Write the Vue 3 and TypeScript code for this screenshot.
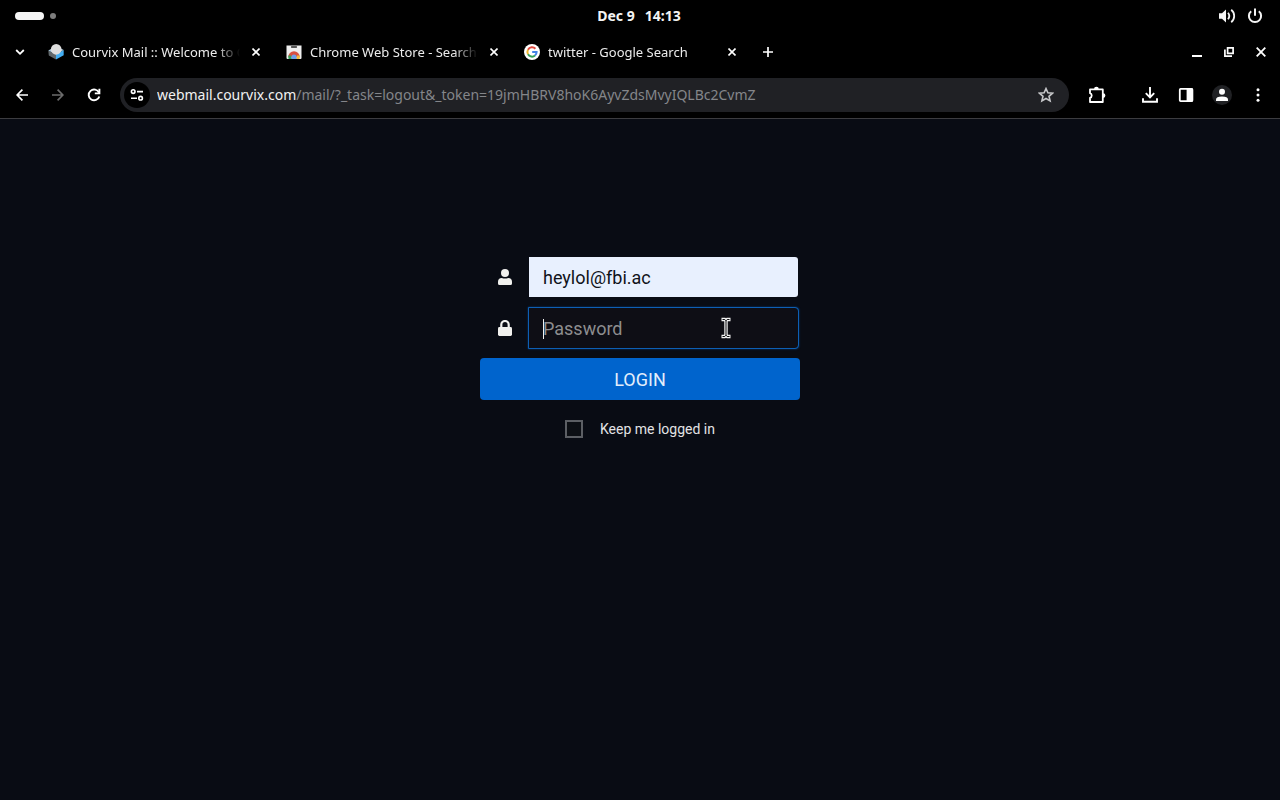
<script setup lang="ts">
import { ref } from 'vue'

interface Tab {
  id: number
  title: string
  icon: 'mail' | 'store' | 'google'
}

const tabs: Tab[] = [
  { id: 1, title: 'Courvix Mail :: Welcome to C', icon: 'mail' },
  { id: 2, title: 'Chrome Web Store - Search', icon: 'store' },
  { id: 3, title: 'twitter - Google Search', icon: 'google' },
]

const username = ref('heylol@fbi.ac')
const password = ref('')
const keep = ref(false)
</script>

<template>
  <div class="screen">
    <header class="system-bar">
      <div class="workspaces"><span class="ws-active"></span><span class="ws-dot"></span></div>
      <time class="clock"><span>Dec 9</span><span>14:13</span></time>
      <div class="status">
        <svg width="18" height="16" viewBox="0 0 18 16" fill="none" stroke="#f4f4f4" stroke-width="1.8">
          <path d="M1 5.2h3L8 1.4v13.2L4 10.8H1z" fill="#f4f4f4" stroke="none" />
          <path d="M10 4.8q2.6 3.2 0 6.4" />
          <path d="M13.2 1.8q3 2.4 3 6.2t-3 6.2" />
        </svg>
        <svg width="16" height="16" viewBox="0 0 16 16" fill="none" stroke="#f4f4f4" stroke-width="2">
          <path d="M4.2 3.2a6.1 6.1 0 1 0 7.6 0M8 0.6v7.2" />
        </svg>
      </div>
    </header>

    <nav class="tab-strip" aria-label="Tabs">
      <button class="tab-search" aria-label="Search tabs">
        <svg width="10" height="10" viewBox="0 0 10 10" fill="none" stroke="#fff" stroke-width="1.8"><path d="M1.2 3l3.8 3.8L8.8 3" /></svg>
      </button>
      <div v-for="tab in tabs" :key="tab.id" class="tab">
        <svg v-if="tab.icon === 'mail'" width="16" height="16" viewBox="0 0 16 16">
          <path d="M0.3 6.5L8 10.6v5L0.8 11.4z" fill="#60676b" />
          <path d="M8 10.6l7.7-4.6v5.2L8 15.6z" fill="#43aef3" />
          <path d="M0.3 6.5L3 5l10-.4L15.7 6 8 10.6z" fill="#a9c9dd" />
          <circle cx="8.2" cy="5.3" r="5.3" fill="#dedede" />
          <path d="M2.9 6.8L8 10.8l5.4-4z" fill="#dedede" />
        </svg>
        <svg v-else-if="tab.icon === 'store'" width="16" height="16" viewBox="0 0 16 16">
          <path d="M0.5 1.5h15v12.5a1 1 0 0 1-1 1h-13a1 1 0 0 1-1-1z" fill="#eeeeee" />
          <path d="M5.6 3h4.8" stroke="#222" stroke-width="1.4" stroke-linecap="round" />
          <path d="M2.2 13a5.8 5.8 0 0 1 11.6 0L8 13z" fill="#d9503f" />
          <path d="M2.4 11.6a5.8 5.8 0 0 0 .2 3.4h3.6L5 11.6z" fill="#35a15a" />
          <path d="M13.6 11.6q.6 1.8-.2 3.4H9.8l1.2-3.4z" fill="#f4be3b" />
          <path d="M5.4 15v-1.8a2.6 2.6 0 0 1 5.2 0V15z" fill="#6f9fe8" />
        </svg>
        <svg v-else width="16" height="16" viewBox="0 0 16 16" fill="none" stroke-width="2">
          <circle cx="8" cy="8" r="8" fill="#fff" />
          <path d="M4 5.7A4.6 4.6 0 0 1 11.4 4.8" stroke="#e04a3f" />
          <path d="M4 5.7a4.7 4.7 0 0 0 0 4.6" stroke="#f2b52d" />
          <path d="M4 10.3a4.6 4.6 0 0 0 7 1.2" stroke="#35a15a" />
          <path d="M11 11.5A4.6 4.6 0 0 0 12.6 8H8.2" stroke="#4382e8" />
        </svg>
        <a class="tab-title" href="#">{{ tab.title }}</a>
        <button class="tab-close" :aria-label="'Close ' + tab.title">
          <svg width="8" height="8" viewBox="0 0 8 8" stroke="#fff" stroke-width="1.6"><path d="M0.5 0.5l7 7M7.5 0.5l-7 7" /></svg>
        </button>
      </div>
      <button class="new-tab" aria-label="New tab">
        <svg width="10" height="10" viewBox="0 0 10 10" stroke="#fff" stroke-width="1.7"><path d="M5 0v10M0 5h10" /></svg>
      </button>
      <div class="window-controls">
        <button aria-label="Minimize">
          <svg width="10" height="10" viewBox="0 0 10 10"><path d="M0 8h10v2H0z" fill="#fff" /></svg>
        </button>
        <button aria-label="Restore">
          <svg width="10" height="10" viewBox="0 0 10 10" fill="none" stroke="#fff" stroke-width="1.7"><path d="M3.6 0.9h5.5v5.5H3.6z" /><path d="M0.9 2.5v6.6H8" /></svg>
        </button>
        <button aria-label="Close window">
          <svg width="10" height="10" viewBox="0 0 10 10" stroke="#fff" stroke-width="1.8"><path d="M0.7 0.7l8.6 8.6M9.3 0.7L0.7 9.3" /></svg>
        </button>
      </div>
    </nav>

    <div class="toolbar">
      <button aria-label="Back">
        <svg width="12" height="12" viewBox="0 0 12 12" fill="none" stroke="#fff" stroke-width="1.7"><path d="M12 6H1.4M6.4 0.7L1.1 6l5.3 5.3" /></svg>
      </button>
      <button aria-label="Forward" disabled>
        <svg width="12" height="12" viewBox="0 0 12 12" fill="none" stroke="#6c6c6c" stroke-width="1.7"><path d="M0 6h10.6M5.6 0.7L10.9 6l-5.3 5.3" /></svg>
      </button>
      <button aria-label="Reload">
        <svg width="14" height="14" viewBox="0 0 14 14" fill="none" stroke="#fff" stroke-width="1.9"><path d="M12 4.6A5.4 5.4 0 1 0 12.3 8.4" /><path d="M12.4 0.8v4.6H7.8" /></svg>
      </button>
      <div class="address">
        <button class="site-info" aria-label="View site information">
          <svg width="14" height="12" viewBox="0 0 14 12" fill="none" stroke="#fff" stroke-width="1.6"><circle cx="3.2" cy="2.6" r="1.8" /><path d="M7 2.6h6M1 9.2h6" /><circle cx="10.6" cy="9.2" r="1.8" /></svg>
        </button>
        <a class="url" href="#">webmail.courvix.com<span>/mail/?_task=logout&amp;_token=19jmHBRV8hoK6AyvZdsMvyIQLBc2CvmZ</span></a>
        <button class="star" aria-label="Bookmark this tab">
          <svg width="16" height="16" viewBox="0 0 16 16" fill="none" stroke="#c6c7c9" stroke-width="1.6"><path d="M8 1.6l1.9 4.2 4.6.4-3.5 3.1 1.1 4.6L8 11.5l-4.1 2.4L5 9.3 1.5 6.2l4.6-.4z" /></svg>
        </button>
      </div>
      <button class="extensions" aria-label="Extensions">
        <svg width="18" height="18" viewBox="0 0 18 18"><path d="M2 7.2V3.4h12.8V16H2v-4.2a2.4 2.4 0 0 0 0-4.6z" fill="none" stroke="#fff" stroke-width="1.8" stroke-linejoin="round" /><path d="M6 3.2a2.4 2.4 0 0 1 4.8 0zM15 7.2a2.4 2.4 0 0 1 0 4.8z" fill="#fff" /></svg>
      </button>
      <button aria-label="Downloads">
        <svg width="16" height="16" viewBox="0 0 16 16" fill="none" stroke="#fff" stroke-width="1.9"><path d="M8 0v10M3.8 6.2L8 10.4l4.2-4.2M1 11.2v3.6h14v-3.6" /></svg>
      </button>
      <button aria-label="Side panel">
        <svg width="16" height="16" viewBox="0 0 16 16"><rect x="1.8" y="1.9" width="12.6" height="12.2" rx="0.8" fill="none" stroke="#fff" stroke-width="1.8" /><path d="M8.6 1.5H15v13H8.6z" fill="#fff" /></svg>
      </button>
      <button aria-label="Profile">
        <svg width="20" height="20" viewBox="0 0 20 20"><circle cx="10" cy="10" r="10" fill="#202124" /><circle cx="10" cy="6.8" r="3" fill="#fff" /><path d="M4 16v-1.4q0-3.2 6-3.2t6 3.2V16z" fill="#fff" /></svg>
      </button>
      <button aria-label="Menu">
        <svg width="4" height="14" viewBox="0 0 4 14" fill="#fff"><circle cx="2" cy="1.8" r="1.5" /><circle cx="2" cy="7" r="1.5" /><circle cx="2" cy="12.2" r="1.5" /></svg>
      </button>
    </div>

    <main class="page">
      <form class="login" @submit.prevent>
        <div class="field">
          <label for="user" aria-label="Username">
            <svg width="14" height="16" viewBox="0 0 14 16" fill="#f1f1ee"><circle cx="7" cy="4" r="4" /><path d="M0 14.5v-1.7Q0 9 3.8 9q3.2 1 6.4 0Q14 9 14 12.8v1.7Q14 16 12.5 16h-11Q0 16 0 14.5z" /></svg>
          </label>
          <input id="user" v-model="username" class="filled" type="text" />
        </div>
        <div class="field">
          <label for="pass" aria-label="Password">
            <svg width="14" height="16" viewBox="0 0 14 16"><path d="M3.3 8V4.7a3.7 3.7 0 0 1 7.4 0V8" fill="none" stroke="#f1f1ee" stroke-width="2.2" /><rect y="7" width="14" height="9" rx="1.4" fill="#f1f1ee" /></svg>
          </label>
          <input id="pass" v-model="password" class="active" type="password" placeholder="Password" />
          <span class="caret"></span>
          <svg class="pointer" width="12" height="22" viewBox="0 0 12 22" fill="none"><path d="M1.5 2.5h3.2L6 3.8l1.3-1.3h3.2M6 3.5v15M1.5 19.5h3.2L6 18.2l1.3 1.3h3.2" stroke="#f4f4f4" stroke-width="3.4" /><path d="M2.5 2.5h2.3L6 3.8l1.2-1.3h2.3M6 3.5v15M2.5 19.5h2.3L6 18.2l1.2 1.3h2.3" stroke="#08090d" stroke-width="1" /></svg>
        </div>
        <button class="submit" type="submit">LOGIN</button>
        <label class="keep"><input v-model="keep" type="checkbox" />Keep me logged in</label>
      </form>
    </main>
  </div>
</template>

<style>
body {
  margin: 0;
  background: #090c14;
}
</style>

<style scoped>
.screen {
  display: flex;
  flex-direction: column;
  min-height: 100vh;
  background: #000;
  color: #fff;
  font-family: "Noto Sans", sans-serif;
}
svg {
  display: block;
  flex: none;
}
button {
  display: flex;
  align-items: center;
  justify-content: center;
  flex: none;
  padding: 0;
  border: 0;
  background: none;
  color: inherit;
  font: inherit;
}
a {
  color: inherit;
  text-decoration: none;
}
.system-bar {
  display: grid;
  grid-template-columns: 1fr auto 1fr;
  align-items: center;
  height: 32px;
  padding: 0 17px 0 15px;
}
.workspaces {
  display: flex;
  align-items: center;
  gap: 6px;
}
.ws-active {
  width: 29px;
  height: 8px;
  border-radius: 4px;
  background: #f6f6f6;
}
.ws-dot {
  width: 6px;
  height: 6px;
  border-radius: 50%;
  background: #7d7d7d;
}
.clock {
  display: flex;
  gap: 10px;
  font-size: 14px;
  font-weight: 700;
  line-height: 20px;
  color: #f4f4f4;
}
.status {
  display: flex;
  justify-content: flex-end;
  gap: 11px;
}
.tab-strip {
  display: flex;
  align-items: center;
  height: 40px;
  font-size: 13px;
}
.tab-search {
  width: 40px;
  height: 28px;
}
.tab {
  display: flex;
  align-items: center;
  gap: 8px;
  flex: 0 1 238px;
  box-sizing: border-box;
  min-width: 0;
  padding: 0 14px 0 8px;
}
.tab-title {
  flex: 1;
  min-width: 0;
  overflow: hidden;
  white-space: nowrap;
  line-height: 20px;
  color: #ececec;
  mask-image: linear-gradient(to right, #000 calc(100% - 24px), transparent);
}
.tab-close {
  width: 16px;
  height: 16px;
}
.new-tab {
  width: 28px;
  height: 28px;
}
.window-controls {
  display: flex;
  margin-left: auto;
  padding-right: 3px;
}
.window-controls button {
  width: 32px;
  height: 28px;
}
.toolbar {
  display: flex;
  align-items: center;
  height: 46px;
  padding: 0 4px;
  border-bottom: 1px solid #3c3c40;
}
.toolbar > button {
  width: 36px;
  height: 34px;
}
.toolbar > .extensions {
  margin-right: 17px;
}
.address {
  display: flex;
  align-items: center;
  flex: 1;
  min-width: 0;
  height: 34px;
  margin: 0 10px 0 8px;
  padding: 0 15px 0 4px;
  box-sizing: border-box;
  border-radius: 17px;
  background: #202125;
}
.site-info {
  width: 26px;
  height: 26px;
  border-radius: 50%;
  background: #000;
}
.url {
  flex: 1;
  min-width: 0;
  margin-left: 7px;
  overflow: hidden;
  white-space: nowrap;
  font-size: 14px;
  line-height: 20px;
  color: #f2f2f2;
}
.url span {
  color: #84868a;
}
.page {
  flex: 1;
  padding: 137px 16px 32px;
  background: #090c14;
  font-family: Roboto, sans-serif;
}
.login {
  display: flex;
  flex-direction: column;
  gap: 9px;
  max-width: 320px;
  margin: 0 auto;
}
.field {
  position: relative;
  display: grid;
  grid-template-columns: 48px 1fr;
  align-items: center;
  padding-right: 1px;
}
.field label {
  display: flex;
  justify-content: center;
  padding-left: 2px;
}
.field input {
  box-sizing: border-box;
  width: 100%;
  min-width: 0;
  height: 42px;
  padding: 0 14px;
  border: 1px solid transparent;
  border-radius: 0 4px 4px 0;
  outline: 0;
  background-clip: padding-box;
  font-family: inherit;
  font-size: 18px;
}
.field .filled {
  background-color: #e8f0fe;
  color: #10131a;
}
.field .active {
  border-color: #0d5fb4;
  background-color: #0e0e15;
  box-shadow: 0 0 2px #0a4380;
  color: #e8e8e8;
}
.field .active::placeholder {
  color: #8d8d8f;
  opacity: 1;
}
.caret {
  position: absolute;
  top: 12px;
  left: 63px;
  width: 1px;
  height: 20px;
  background: #f0f0f0;
}
.pointer {
  position: absolute;
  top: 10px;
  right: 68px;
}
.submit {
  height: 42px;
  border-radius: 4px;
  background: #0064cd;
  color: #e3eefb;
  font-size: 18px;
}
.keep {
  display: flex;
  align-items: center;
  justify-content: center;
  gap: 17px;
  margin-top: 11px;
  font-size: 14px;
  line-height: 18px;
  color: #e2e3e5;
}
.keep input {
  appearance: none;
  box-sizing: border-box;
  width: 18px;
  height: 18px;
  margin: 0;
  border: 2px solid #5c5f64;
  background: #0c0f14;
}
.keep input:checked {
  background: #0064cd;
}
</style>
